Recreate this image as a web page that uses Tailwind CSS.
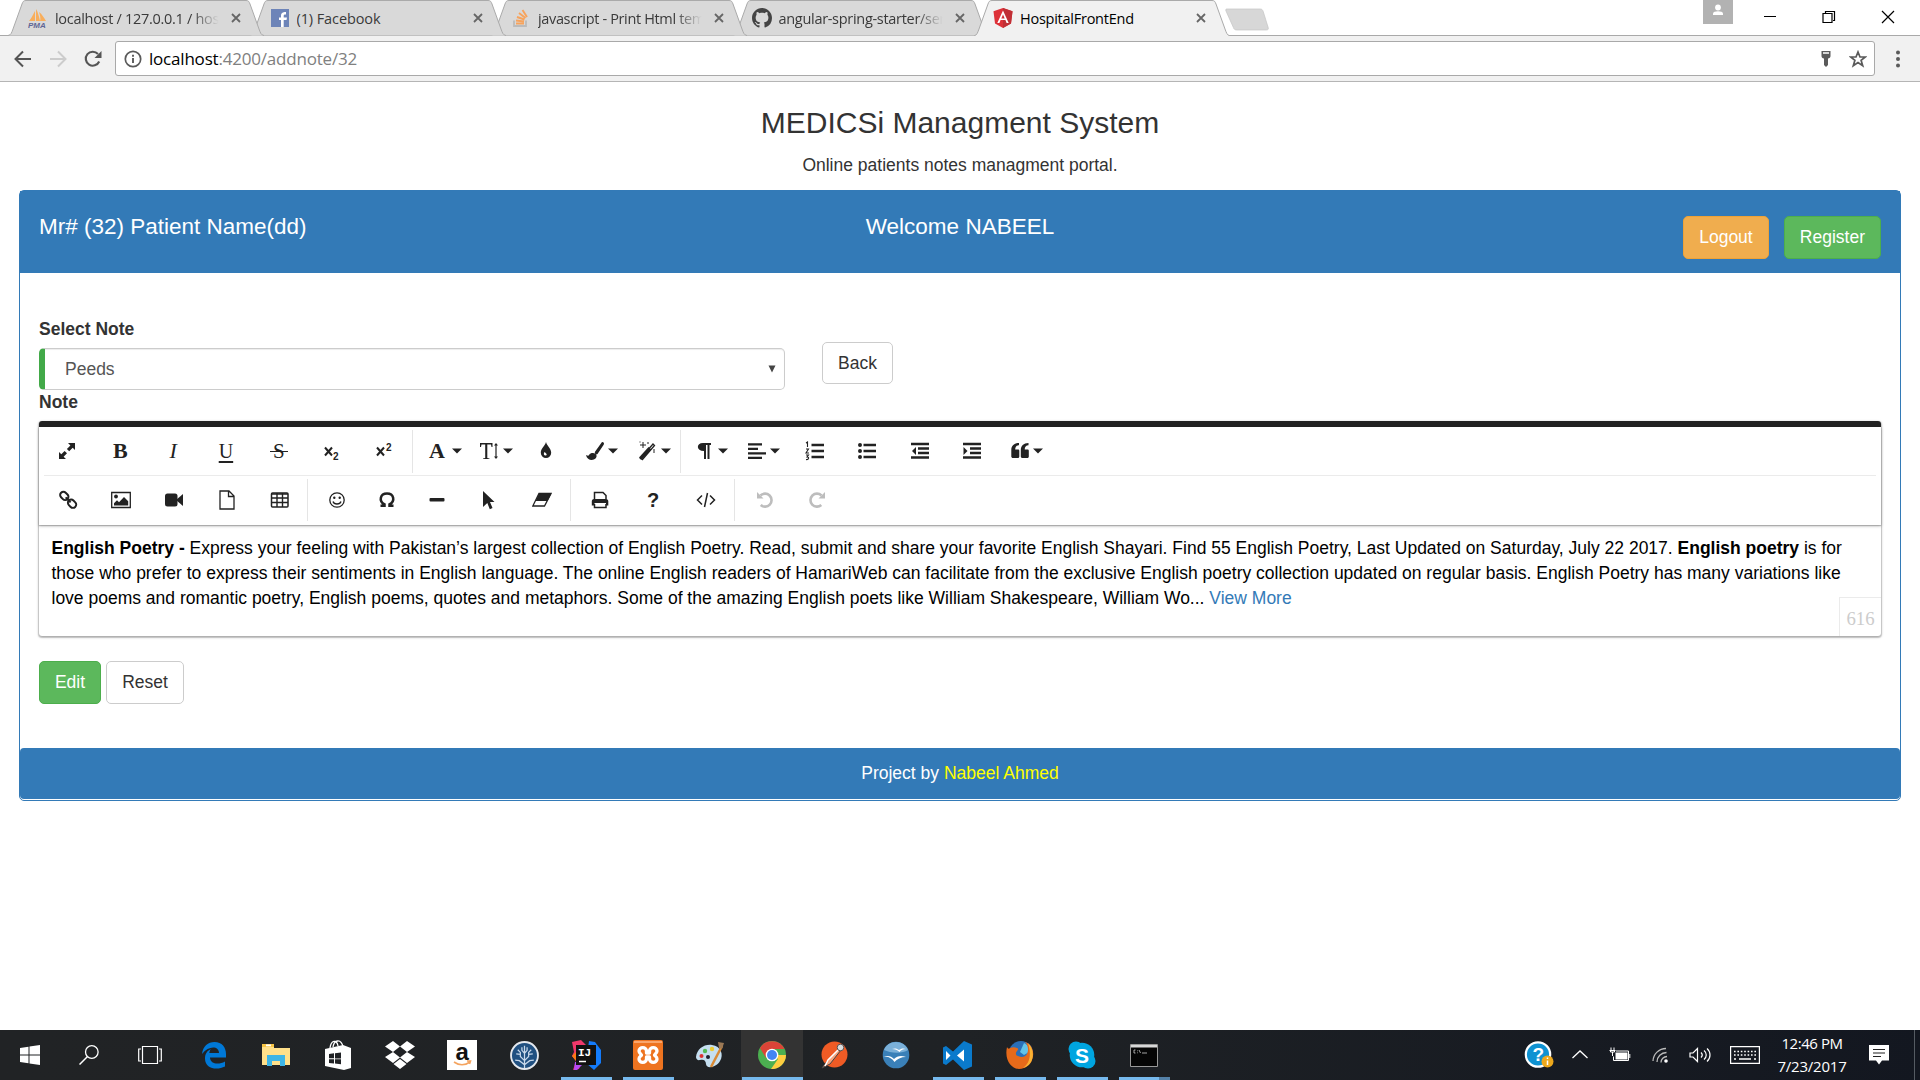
<!DOCTYPE html>
<html lang="en">
<head>
<meta charset="utf-8">
<title>HospitalFrontEnd</title>
<script src="https://cdn.jsdelivr.net/npm/@tailwindcss/browser@4"></script>
</head>
<body class="flex h-[1080px] w-[1920px] flex-col overflow-hidden bg-white font-['Liberation_Sans',Arial,sans-serif] text-[17.5px] leading-[25px] text-[#333]">

<svg width="0" height="0" class="absolute">
  <defs>
    <symbol id="close" viewBox="0 0 12 12"><path d="M2 2l8 8M10 2l-8 8" stroke="#666" stroke-width="1.8" fill="none"/></symbol>
    <symbol id="tab" viewBox="0 0 256 36"><path d="M0 35.5C3 35 3.500 33 5 29L14 4C15 1.500 15.500.5 18 .5H238C240.500.5 241 1.500 242 4L251 29C252.500 33 253 35 256 35.500" fill="#d9d9d9" stroke="#aaa"/></symbol>
    <symbol id="caret" viewBox="0 0 10 6"><path d="M0 .5h10L5 5.500z" fill="#222"/></symbol>
  </defs>
</svg>

<!-- Tab strip -->
<header class="flex h-9 shrink-0 justify-between border-b border-[#a9a9a9] bg-white font-['Open_Sans',sans-serif] text-[14.500px] tracking-[-0.350px] text-[#3a3a3a]">
  <div class="flex h-9 pl-2">
    <div class="relative z-40 -mr-[14.500px] flex h-9 w-64 shrink-0 items-center pl-5">
      <svg class="absolute top-0 left-0 h-9 w-64"><use href="#tab"/></svg>
      <svg class="relative mr-[7px] h-5 w-5 shrink-0" viewBox="0 0 20 20"><path d="M1 13C4 10 5 6 7 3v10zM8 13V1c2 3 3 8 4 12zM12 13c1-2 0-6-1-9 3 2 5 6 7 9z" fill="#f9ae5b"/><text x="0" y="19.500" font-size="8" letter-spacing="0" font-weight="bold" font-style="italic" fill="#5f6695" font-family="Liberation Sans">PMA</text></svg>
      <span class="relative w-[167px] overflow-hidden whitespace-nowrap tracking-[-0.300px] [mask-image:linear-gradient(to_right,black_82%,transparent_98%)]">localhost / 127.0.0.1 / hospital</span>
      <svg class="relative ml-2 h-3 w-3"><use href="#close"/></svg>
    </div>
    <div class="relative z-30 -mr-[14.500px] flex h-9 w-64 shrink-0 items-center pl-5">
      <svg class="absolute top-0 left-0 h-9 w-64"><use href="#tab"/></svg>
      <svg class="relative mr-[7px] h-5 w-5 shrink-0" viewBox="0 0 20 20"><path d="M1 1h18v18H1z" fill="#6d84b8"/><path d="M11 19v-7H9V9.500h2V8c0-3 1.500-4 5-4v2.500c-2 0-2.300.3-2.300 1.500v1.500H17L16.500 12h-2.800v7z" fill="#fff"/></svg>
      <span class="relative w-[167px] overflow-hidden whitespace-nowrap tracking-[-0.100px]">(1) Facebook</span>
      <svg class="relative ml-2 h-3 w-3"><use href="#close"/></svg>
    </div>
    <div class="relative z-20 -mr-[14.500px] flex h-9 w-64 shrink-0 items-center pl-5">
      <svg class="absolute top-0 left-0 h-9 w-64"><use href="#tab"/></svg>
      <svg class="relative mr-[7px] h-5 w-5 shrink-0" viewBox="0 0 20 20"><path d="M3 12.500v5.500h12v-5.500" stroke="#bbb" stroke-width="1.800" fill="none"/><path d="M5 15.500h8M5 12.500l8 1M6 9l7.500 2.500M8 5l6.500 5M11.500 2l4.500 7" stroke="#f7a35c" stroke-width="1.900"/></svg>
      <span class="relative w-[167px] overflow-hidden whitespace-nowrap [mask-image:linear-gradient(to_right,black_82%,transparent_98%)]">javascript - Print Html template</span>
      <svg class="relative ml-2 h-3 w-3"><use href="#close"/></svg>
    </div>
    <div class="relative z-10 -mr-[14.500px] flex h-9 w-64 shrink-0 items-center pl-5">
      <svg class="absolute top-0 left-0 h-9 w-64"><use href="#tab"/></svg>
      <svg class="relative mr-[7px] -ml-px h-5 w-5 shrink-0" viewBox="0 0 16 16"><path fill="#444" d="M8 0C3.580 0 0 3.580 0 8c0 3.540 2.290 6.530 5.470 7.590.4.070.55-.17.55-.38 0-.19-.01-.82-.01-1.490-2.010.37-2.530-.49-2.690-.94-.09-.23-.48-.94-.82-1.130-.28-.15-.68-.52-.01-.53.63-.01 1.080.58 1.230.82.72 1.210 1.870.87 2.330.66.07-.52.28-.87.51-1.070-1.780-.2-3.640-.89-3.640-3.950 0-.87.31-1.590.82-2.150-.08-.2-.36-1.020.08-2.120 0 0 .67-.21 2.200.82.64-.18 1.320-.27 2-.27s1.360.09 2 .27c1.530-1.040 2.200-.82 2.200-.82.44 1.100.16 1.920.08 2.120.51.56.82 1.270.82 2.150 0 3.070-1.870 3.750-3.650 3.950.29.25.54.73.54 1.480 0 1.070-.01 1.930-.01 2.200 0 .21.15.46.55.38A8.010 8.010 0 0016 8c0-4.420-3.580-8-8-8z"/></svg>
      <span class="relative w-[167px] overflow-hidden whitespace-nowrap tracking-[-0.300px] [mask-image:linear-gradient(to_right,black_82%,transparent_98%)]">angular-spring-starter/server</span>
      <svg class="relative ml-2 h-3 w-3"><use href="#close"/></svg>
    </div>
    <div class="relative z-50 flex h-9 w-64 shrink-0 items-center pl-[19px] text-black">
      <svg class="absolute top-0 left-0 h-9 w-64" viewBox="0 0 256 36"><path d="M0 36C3 35 3.500 33 5 29L14 4C15 1.500 15.500.5 18 .5H238C240.500.5 241 1.500 242 4L251 29C252.500 33 253 35 256 36" fill="#f1f1f1" stroke="#aaa"/></svg>
      <svg class="relative mr-[7px] h-5 w-5 shrink-0" viewBox="0 0 20 20"><path d="M10 0l9.500 3.300L18 15.500 10 20l-8-4.500L.5 3.300z" fill="#dd3138"/><path d="M10 0l9.500 3.300L18 15.500 10 20z" fill="#c02f35"/><path d="M10 2.500L4.300 15h2.100l1.200-2.900h4.800l1.200 2.900h2.100zM10 6.400l1.700 4H8.300z" fill="#fff"/></svg>
      <span class="relative w-[167px] overflow-hidden whitespace-nowrap tracking-[-0.250px]">HospitalFrontEnd</span>
      <svg class="relative ml-2 h-3 w-3"><use href="#close"/></svg>
    </div>
    <svg class="-ml-[5px] h-8 w-11 pt-2" viewBox="0 0 44 24"><path d="M2 1h33c2 0 2.500.8 3.200 2.500L43 19c.8 2 .3 3-2 3H12c-2 0-3-.6-3.600-2.500L1 3C.5 1.500.7 1 2 1z" fill="#d7d7d7" stroke="#c4c4c4" stroke-width=".7"/></svg>
  </div>
  <div class="flex">
    <svg class="h-6 w-[30px]" viewBox="0 0 30 24"><path d="M0 0h30v24H0z" fill="#b2b2b2"/><circle cx="15" cy="7.500" r="2.900" fill="#fff"/><path d="M10 15v-1.500c0-3 10-3 10 0V15z" fill="#fff"/></svg>
    <svg class="ml-[31px] h-9 w-3" viewBox="0 0 12 36"><path d="M0 16.500h12" stroke="#000"/></svg>
    <svg class="ml-[46px] h-9 w-3.5" viewBox="0 0 14 36"><path d="M1 13.500h9v9H1zM3.500 13v-1.500h9v9H11" fill="none" stroke="#000" stroke-width="1.200"/></svg>
    <svg class="mr-[25px] ml-[45px] h-9 w-3.5" viewBox="0 0 14 36"><path d="M1 11l12 12M13 11L1 23" stroke="#000" stroke-width="1.200"/></svg>
  </div>
</header>

<!-- Address bar -->
<nav class="flex h-[46px] shrink-0 items-center border-b border-[#b5b5b5] bg-[#f1f1f1] pl-3.5">
  <svg class="h-[18px] w-[18px]" viewBox="0 0 18 18"><path d="M17 9H2M9 1.500L1.500 9 9 16.500" fill="none" stroke="#555" stroke-width="2"/></svg>
  <svg class="ml-[17px] h-[18px] w-[18px]" viewBox="0 0 18 18"><path d="M1 9h15M9 1.500L16.500 9 9 16.500" fill="none" stroke="#ccc" stroke-width="2"/></svg>
  <svg class="ml-[17px] h-[18px] w-[18px]" viewBox="0 0 18 18"><path d="M15.200 11.500A7 7 0 1 1 14 4" fill="none" stroke="#555" stroke-width="2.100"/><path d="M17.500 1v7h-7z" fill="#555"/></svg>
  <div class="ml-[13px] flex h-[35px] w-[1760px] items-center rounded-[3px] border border-[#a9a9a9] bg-white pr-[7px] pl-2">
    <svg class="h-[18px] w-[18px]" viewBox="0 0 18 18"><circle cx="9" cy="9" r="7.700" fill="none" stroke="#5a5a5a" stroke-width="1.700"/><path d="M9 8v5M9 4.800v2" stroke="#5a5a5a" stroke-width="1.900"/></svg>
    <span class="ml-[7px] font-['Open_Sans',sans-serif] text-[17px] tracking-[-0.200px] text-[#808080]"><span class="text-black">localhost</span>:4200/addnote/32</span>
    <svg class="mr-[17px] ml-auto h-4 w-3" viewBox="0 0 12 16"><path fill-rule="evenodd" d="M1.500 0h9v5c0 1.500-1 2.500-2.500 2.500V14l-2 2-2-2V7.500C2.500 7.500 1.500 6.500 1.500 5zM3 1.300v1.400h6V1.300z" fill="#5a5a5a"/></svg>
    <svg class="h-[18px] w-[18px]" viewBox="0 0 18 18"><path d="M9 2l2 5h5.300l-4.200 3.300 1.600 5.400L9 12.500l-4.700 3.200 1.600-5.400L1.700 7H7z" fill="none" stroke="#5a5a5a" stroke-width="1.700"/></svg>
  </div>
  <svg class="ml-5 h-[18px] w-1.5" viewBox="0 0 6 18"><path d="M3 2.500v0M3 9v0M3 15.500v0" stroke="#5a5a5a" stroke-width="4" stroke-linecap="round"/></svg>
</nav>

<!-- Page -->
<main class="flex grow flex-col px-[19px] pt-6">
  <h3 class="text-center text-[30px] leading-[33px]">MEDICSi Managment System</h3>
  <p class="mt-3.5 text-center">Online patients notes managment portal.</p>

  <section class="mt-3 flex h-[611px] flex-col rounded-[5px] border border-[#337ab7]">
    <div class="flex h-[82px] shrink-0 bg-[#337ab7] px-[19px] text-white">
      <h4 class="w-1/3 pt-[23px] text-[22.500px]">Mr# (32) Patient Name(dd)</h4>
      <h4 class="w-1/3 pt-[23px] text-center text-[22.500px]">Welcome NABEEL</h4>
      <div class="flex w-1/3 justify-end gap-[15px] pt-[25px]">
        <button class="h-[43px] w-[86px] rounded-[5px] border border-[#eea236] bg-[#f0ad4e]">Logout</button>
        <button class="h-[43px] w-[97px] rounded-[5px] border border-[#4cae4c] bg-[#5cb85c]">Register</button>
      </div>
    </div>
    <div class="flex grow flex-col px-[19px] pt-[44px]">
      <div class="flex">
        <div class="w-[746px]">
          <label class="block font-bold">Select Note</label>
          <div class="mt-[6px] flex h-[42px] items-center justify-between rounded-[5px] border border-l-[6px] border-[#ccc] border-l-[#42a948] pr-2 pl-5 text-[#555] shadow-[inset_0_1px_1px_rgba(0,0,0,0.075)]">Peeds<svg class="h-2 w-2" viewBox="0 0 8 8"><path d="M.5.5h7L4 7.500z" fill="#444"/></svg></div>
        </div>
        <button class="mt-[25px] ml-[37px] h-[42px] w-[71px] rounded-[5px] border border-[#ccc]">Back</button>
      </div>
      <label class="block h-[31px] font-bold">Note</label>

      <!-- Rich text editor -->
      <div class="h-[215px] shrink-0 rounded-[3px] border-t-[6px] border-[#222] shadow-[0_1px_3px_rgba(0,0,0,0.3),0_1px_1px_1px_rgba(0,0,0,0.14)]">
        <div class="h-[98px] px-[5px] shadow-[0_1px_3px_rgba(0,0,0,0.25),0_1px_1px_rgba(0,0,0,0.2)]">
          <div class="flex h-[49px] items-center border-b border-[#ebebeb]">
            <div class="-ml-[3px] flex w-[370px] shrink-0 items-center justify-around">
              <svg class="h-5 w-5" viewBox="0 0 20 20"><path d="M11 2h7v7l-2.300-2.300-3.500 3.500-2.300-2.300 3.500-3.500zM9 18H2v-7l2.300 2.300 3.300-3.300 2.400 2.300-3.400 3.400z" fill="#222"/></svg>
              <span class="w-5 text-center font-['Liberation_Serif',serif] text-[22px] leading-5 font-bold text-[#222]">B</span>
              <span class="w-5 text-center font-['Liberation_Serif',serif] text-[22px] leading-5 text-[#222] italic">I</span>
              <span class="w-5 text-center font-['Liberation_Serif',serif] text-[20px] leading-5 text-[#222] underline underline-offset-3">U</span>
              <span class="relative flex w-5 justify-center font-['Liberation_Serif',serif] text-[21px] leading-5 text-[#222]">S<i class="absolute top-[10px] left-px h-px w-[18px] bg-[#222]"></i></span>
              <svg class="h-5 w-5" viewBox="0 0 20 20"><path d="M3 6.500l7 8M10 6.500l-7 8" stroke="#222" stroke-width="2"/><text x="11" y="19" font-size="10" font-weight="bold" fill="#222">2</text></svg>
              <svg class="h-5 w-5" viewBox="0 0 20 20"><path d="M3 6.500l7 8M10 6.500l-7 8" stroke="#222" stroke-width="2"/><text x="12" y="9.500" font-size="10" font-weight="bold" fill="#222">2</text></svg>
            </div>
            <div class="ml-px h-[43px] w-px shrink-0 bg-[#e5e5e5]"></div>
            <div class="flex w-[267px] shrink-0 items-center pl-[13px]">
              <span class="flex w-[53px] shrink-0 items-center gap-1"><span class="w-[22px] text-center font-['Liberation_Serif',serif] text-[22px] leading-5 font-bold text-[#222]">A</span><svg class="h-1.5 w-2.5"><use href="#caret"/></svg></span>
              <span class="flex w-[60px] shrink-0 items-center gap-1"><svg class="h-5 w-5" viewBox="0 0 20 20"><path d="M1 2h12.500v4h-1l-.5-2.500H8.300V17l2.200.5V18H4v-.5l2.200-.5V3.500H2.500L2 6H1zM17 2l2 2.500h-1.400v11H19L17 18l-2-2.500h1.400v-11H15z" fill="#222"/></svg><svg class="h-1.5 w-2.5"><use href="#caret"/></svg></span>
              <svg class="mr-[26px] h-5 w-5 shrink-0" viewBox="0 0 20 20"><path fill-rule="evenodd" d="M7 1c1 4 5.200 6.500 5.200 10.700A5.200 5.200 0 1 1 1.800 11.700C1.800 7.500 6 5 7 1zM5.500 11c-1.200 1.700-.7 3.500 1 3.500 1.500 0 2-1.500-1-3.500z" fill="#222"/></svg>
              <span class="flex w-[52px] shrink-0 items-center gap-[3px]"><svg class="h-5 w-5" viewBox="0 0 20 20"><path d="M17 1c2 0 2.500 1.500 1.500 3l-6 9c-1 1.300-3.500-1-2.500-2.200zM8 12c3 0 5 3 2.500 5.500C8 20 2 19.500 1 14c2 1 2.500 1 3 0 1-1.500 2-2 4-2z" fill="#222"/></svg><svg class="h-1.5 w-2.5"><use href="#caret"/></svg></span>
              <span class="flex shrink-0 items-center gap-[4px]"><svg class="h-5 w-5" viewBox="0 0 20 20"><path d="M3 18L16 3l1.500 1.500L5 19" fill="none" stroke="#222" stroke-width="1.300"/><path d="M2 16.500L11.500 6l3 2.500L4.500 19z" fill="#222"/><path d="M6 1v6M3 4h6M11 1v2M17 8v4M3 .5v1" stroke="#222" stroke-width="1"/></svg><svg class="h-1.5 w-2.5"><use href="#caret"/></svg></span>
            </div>
            <div class="h-[43px] w-px shrink-0 bg-[#e5e5e5]"></div>
            <div class="flex items-center pl-[13px]">
              <span class="flex w-[53px] items-center gap-1"><svg class="h-5 w-5" viewBox="0 0 20 20"><path d="M17 2v2h-1.500v14h-2V4H12v14h-2v-8C2 10 2 2 9 2z" fill="#222"/></svg><svg class="h-1.5 w-2.5"><use href="#caret"/></svg></span>
              <span class="flex w-[58px] items-center gap-[3px]"><svg class="h-5 w-5" viewBox="0 0 20 20"><path d="M1 3h14M1 7.500h10M1 12h18M1 16.500h14" transform="translate(0 .3)" stroke="#222" stroke-width="2.200"/></svg><svg class="h-1.5 w-2.5"><use href="#caret"/></svg></span>
              <svg class="h-5 w-5" viewBox="0 0 20 20"><path d="M6.500 4H19M6.500 10H19M6.500 16H19" stroke="#222" stroke-width="2.500"/><path d="M1 2l1.500-1v5M1 8h2.500L1 12h3M1 14h2.500L2 16c2.500 0 2 3-1 2.500" fill="none" stroke="#222" stroke-width="1.100"/></svg>
              <svg class="ml-8 h-5 w-5" viewBox="0 0 20 20"><path d="M6.500 4H19M6.500 10H19M6.500 16H19" stroke="#222" stroke-width="2.500"/><path d="M3 4v0M3 10v0M3 16v0" stroke="#222" stroke-width="4" stroke-linecap="round"/></svg>
              <svg class="ml-[33px] h-5 w-5" viewBox="0 0 20 20"><path d="M1 3h18M8 7.500h11M8 12h11M1 16.500h18" stroke="#222" stroke-width="2.300"/><path d="M6 6v8l-4-4z" fill="#222"/></svg>
              <svg class="ml-8 h-5 w-5" viewBox="0 0 20 20"><path d="M1 3h18M8 7.500h11M8 12h11M1 16.500h18" stroke="#222" stroke-width="2.300"/><path d="M1.500 6v8l4-4z" fill="#222"/></svg>
              <svg class="mr-[3px] ml-7 h-5 w-5" viewBox="0 0 20 20"><path id="q" d="M9 2v2.200C6.500 4.200 5.200 6 5.200 8.500H8c.8 0 1.300.5 1.300 1.300v5.700c0 .8-.5 1.500-1.500 1.500H3c-1 0-1.700-.7-1.700-1.500V9C1.300 5 4 2 9 2z" fill="#222"/><use href="#q" x="9.500"/></svg><svg class="h-1.5 w-2.5"><use href="#caret"/></svg>
            </div>
          </div>
          <div class="flex h-[49px] items-center pb-0.5">
            <div class="-ml-[3px] flex w-[266px] justify-around">
              <svg class="h-5 w-5" viewBox="0 0 20 20"><g transform="rotate(45 10 10)" fill="none" stroke="#222" stroke-width="2"><rect x="0" y="6.500" width="9" height="6.500" rx="3.200"/><rect x="11" y="6.500" width="9" height="6.500" rx="3.200"/><path d="M6.500 9.800h7"/></g></svg>
              <svg class="h-5 w-5" viewBox="0 0 20 20"><path d="M.7 2.500h18.600v15H.7z" fill="none" stroke="#222" stroke-width="1.300"/><circle cx="5" cy="6.500" r="1.900" fill="#222"/><path d="M3 15.500v-2.300l3-3 2 2L13 7l4.200 4.200v4.300z" fill="#222"/></svg>
              <svg class="h-5 w-5" viewBox="0 0 20 20"><rect x="1" y="3.500" width="12.500" height="13" rx="2.500" fill="#222"/><path d="M12 10l7-6v12z" fill="#222"/></svg>
              <svg class="h-5 w-5" viewBox="0 0 20 20"><path d="M3 1h9l5 5v13H3zM11.500 1v5.500H17" fill="none" stroke="#222" stroke-width="1.300"/></svg>
              <svg class="h-5 w-5" viewBox="0 0 20 20"><rect x="1.500" y="3" width="16.500" height="14" rx="1" fill="none" stroke="#222" stroke-width="1.500"/><path d="M1 4h17M1 8h17M1 12.500h17M7 3v14M12.500 3v14" stroke="#222" stroke-width="1.400"/></svg>
            </div>
            <div class="h-[42px] w-px bg-[#e5e5e5]"></div>
            <div class="flex items-center pl-[19px]">
              <svg class="h-5 w-5" viewBox="0 0 20 20"><circle cx="10" cy="10" r="7.200" fill="none" stroke="#222" stroke-width="1.300"/><path d="M6 11.500c1 3.300 7 3.300 8 0" fill="none" stroke="#222" stroke-width="1.300"/><circle cx="7.300" cy="7.700" r="1.200" fill="#222"/><circle cx="12.700" cy="7.700" r="1.200" fill="#222"/></svg>
              <svg class="ml-[30px] h-5 w-5" viewBox="0 0 20 20"><path d="M3.500 15.800h4v-1.500C1.500 11 3 3.500 10 3.500s8.500 7.500 2.500 10.800v1.500h4" fill="none" stroke="#222" stroke-width="2.500"/></svg>
              <svg class="ml-[30px] h-5 w-5" viewBox="0 0 20 20"><rect x="2.500" y="8" width="15" height="3.500" rx="1" fill="#222"/></svg>
              <svg class="ml-[32px] h-5 w-5" viewBox="0 0 20 20"><path d="M4 1l11.500 11H11l2.500 6-2.700 1.200L8.300 13 4 17z" fill="#222"/></svg>
              <svg class="ml-[33px] h-5 w-5" viewBox="0 0 20 20"><path d="M7 3.500h12L12.500 16H.8z" fill="none" stroke="#222" stroke-width="1.300"/><path d="M7 3.500h12.500l-4 7.500H3.500z" fill="#222"/></svg>
            </div>
            <div class="ml-[18px] h-[42px] w-px bg-[#e5e5e5]"></div>
            <div class="flex items-center pl-[19px]">
              <svg class="h-5 w-5" viewBox="0 0 20 20"><path d="M4.500 9.500V2.500h8.500l3 3v4M4.500 14v3.500h11.500V14" fill="none" stroke="#222" stroke-width="1.500"/><path d="M4 9h12c1.500 0 2.300 1 2.300 2.300v4.200H16V13H4.500v2.500H1.800v-4.200C1.800 10 2.500 9 4 9z" fill="#222"/></svg>
              <span class="ml-[33px] w-5 text-center text-[20px] leading-5 font-bold text-[#222]">?</span>
              <svg class="ml-[33px] h-5 w-5" viewBox="0 0 20 20"><path d="M6 5.500L1.500 10 6 14.500M14 5.500l4.500 4.500-4.500 4.500M11.500 3l-3 14" fill="none" stroke="#222" stroke-width="1.500"/></svg>
            </div>
            <div class="ml-[18px] h-[42px] w-px bg-[#e5e5e5]"></div>
            <div class="flex items-center gap-8 pl-5">
              <svg class="h-5 w-5" viewBox="0 0 20 20"><path d="M5.500 5.500a6.500 6.500 0 1 1 .2 9.500" fill="none" stroke="#bdbdbd" stroke-width="2.600"/><path d="M2 2v6.500h6.500z" fill="#bdbdbd"/></svg>
              <svg class="h-5 w-5" viewBox="0 0 20 20"><path d="M14.500 5.500a6.500 6.500 0 1 0-.2 9.500" fill="none" stroke="#bdbdbd" stroke-width="2.600"/><path d="M18 2v6.500h-6.500z" fill="#bdbdbd"/></svg>
            </div>
          </div>
        </div>
        <div class="relative h-[111px] px-[12.500px] pt-[11px] text-black">
          <p class="whitespace-nowrap"><b>English Poetry - </b>Express your feeling with Pakistan’s largest collection of English Poetry. Read, submit and share your favorite English Shayari. Find 55 English Poetry, Last Updated on Saturday, July 22 2017. <b>English poetry</b> is for<br>those who prefer to express their sentiments in English language. The online English readers of HamariWeb can facilitate from the exclusive English poetry collection updated on regular basis. English Poetry has many variations like<br>love poems and romantic poetry, English poems, quotes and metaphors. Some of the amazing English poets like William Shakespeare, William Wo... <a class="text-[#337ab7]">View More</a></p>
          <span class="absolute right-0 bottom-0 flex h-[39px] w-[42px] items-center justify-center border-t border-l border-[#ebebeb] pt-0.5 font-['Liberation_Serif',serif] text-[18.750px] text-[#ccc]">616</span>
        </div>
      </div>

      <div class="mt-[25px] flex gap-[5px]">
        <button class="h-[43px] w-[62px] rounded-[5px] border border-[#4cae4c] bg-[#5cb85c] text-white">Edit</button>
        <button class="h-[43px] w-[78px] rounded-[5px] border border-[#ccc]">Reset</button>
      </div>
    </div>
    <footer class="mb-px h-[51px] shrink-0 rounded-[4px] bg-[#337ab7] pt-[13px] text-center text-white">Project by <span class="text-[#ff0]">Nabeel Ahmed</span></footer>
  </section>
</main>

<!-- Taskbar -->
<div class="flex h-[50px] shrink-0 justify-between bg-gradient-to-r from-[#212325] via-[#1f2225] to-[#131720]">
  <div class="flex">
    <div class="mr-[2px] flex w-[181px] items-center justify-around pl-px">
      <svg class="h-5 w-5" viewBox="0 0 20 20"><path d="M0 3l8.500-1.200v7.700H0zM9.500 1.600L20 0v9.500H9.500zM0 10.500h8.500v7.700L0 17zM9.500 10.500H20V20L9.500 18.400z" fill="#fff"/></svg>
      <svg class="h-5 w-5" viewBox="0 0 20 20"><circle cx="12.800" cy="7" r="6.300" fill="none" stroke="#fff" stroke-width="1.300"/><path d="M8.500 11.500L.5 19.500" stroke="#fff" stroke-width="1.500"/></svg>
      <svg class="h-5 w-6" viewBox="0 0 24 20"><path d="M4.500 1.500h15v17h-15zM3 4H.7v12H3M21 4h2.300v12H21" fill="none" stroke="#fff" stroke-width="1.200"/></svg>
    </div>
    <div class="flex w-[62px] items-center justify-center"><svg class="h-7 w-7" viewBox="0 0 28 28"><path d="M2 13C3 5 8 1 14.500 1 22 1 26 6.500 26 13v3.500H10c.3 7 9 7.500 15 4v5c-8 4-20 2.500-20-8 0-5 2.500-8 6-9.500-1 1-1.500 2.500-1.700 4H19C19 5 9 4 2 13z" fill="#0078d7"/></svg></div>
    <div class="flex w-[62px] items-center justify-center"><svg class="h-7 w-7" viewBox="0 0 28 28"><path d="M0 3h12v4h16v17H0z" fill="#ffe08a"/><path d="M0 3h12v3H0z" fill="#f6c445"/><path d="M4 3.500h5v1.800H4z" fill="#fff"/><path d="M5 14h18v11h-5v-5h-8v5H5z" fill="#3db5e6"/></svg></div>
    <div class="flex w-[62px] items-center justify-center"><svg class="h-[30px] w-7" viewBox="0 0 28 30"><path d="M1 9l18-4 8 3v20l-7 2-19-4z" fill="#fff"/><path d="M6 8C7 0 13-1 14 6M9 7c1-7 8-9 10 0" fill="none" stroke="#fff" stroke-width="1.300"/><path d="M5 14l5-.7v5H5zM11 13.200l6-.8v6h-6zM5 19.300h5v4.200l-5-.5zM11 19.300h6v5l-6-.7z" fill="#202225"/></svg></div>
    <div class="flex w-[62px] items-center justify-center"><svg class="h-7 w-[30px]" viewBox="0 0 30 28"><path d="M8 0l7 5.500L8 11 0 5.500zM22 0l-7 5.500 7 5.500 8-5.500zM0 16l8-5 7 5.500L8 22zM30 16l-8-5-7 5.500 7 5.500zM15 18l6.500 5-6.500 5-6.500-5z" fill="#fff"/></svg></div>
    <div class="flex w-[62px] items-center justify-center"><svg class="h-[30px] w-[30px]" viewBox="0 0 30 30"><path d="M0 0h30v30H0z" fill="#fff"/><text x="8.500" y="19.500" font-size="24" font-weight="bold" fill="#111" font-family="Liberation Sans">a</text><path d="M7 22c5 3.500 11 3.500 16 0M20 21h3.500l-1 3" fill="none" stroke="#f4a460" stroke-width="1.600"/></svg></div>
    <div class="flex w-[62px] items-center justify-center"><svg class="h-[29px] w-[29px]" viewBox="0 0 28 28"><circle cx="14" cy="14" r="13" fill="#205081" stroke="#e4e8ee" stroke-width="1.800"/><path d="M14 26V4.500M14 19l-4-4v-4L7.500 8.500M14 19l4-4v-4l2.500-2.500M10 13l-4-.5M18 13l4-.5M14 23l-5-4-4-.5M14 23l5-4 4-.5M14 12l-2.500-3V6M14 12l2.500-3V6" fill="none" stroke="#c8d8ea" stroke-width="1.200"/></svg></div>
    <div class="relative flex w-[62px] items-center justify-center"><svg class="h-[30px] w-[30px]" viewBox="0 0 30 30"><path d="M1 2l9-2 6 6L8 29 2 30l3-9-4-5 2-4z" fill="#f0386b"/><path d="M1 16l5-5 3 13-4-3z" fill="#f97a12"/><path d="M4 22h10l-8 8H3z" fill="#b74af7"/><path d="M18 1l6 1 6 8v13l-7 7-8-7z" fill="#147bfa"/><path d="M5 5h20v20H5z" fill="#111"/><text x="7" y="16" font-size="11" font-weight="bold" fill="#fff" font-family="Liberation Mono">IJ</text><path d="M8 21.500h7" stroke="#fff" stroke-width="1.500"/></svg><i class="absolute bottom-0 h-[3px] w-[51px] bg-[#76b9ed]"></i></div>
    <div class="relative flex w-[62px] items-center justify-center"><svg class="h-[30px] w-[30px]" viewBox="0 0 30 30"><rect width="30" height="30" rx="2" fill="#ee7420"/><path d="M1 1h28v2H1z" fill="#f9a66c"/><path d="M13.500 11c0-4.500-7.500-4.500-7.500 0 0 2.500 2.500 3 2.500 4S6 16.500 6 19c0 4.500 7.500 4.500 7.500 0v-2h3v2c0 4.500 7.500 4.500 7.500 0 0-2.500-2.500-3-2.500-4s2.500-1.500 2.500-4c0-4.500-7.500-4.500-7.500 0v2h-3z" fill="#ee7420" stroke="#fff" stroke-width="3.300" stroke-linejoin="round"/></svg><i class="absolute bottom-0 h-[3px] w-[51px] bg-[#76b9ed]"></i></div>
    <div class="flex w-[62px] items-center justify-center"><svg class="h-[30px] w-[30px]" viewBox="0 0 30 30"><path d="M1 17C2 9 9 4 17 5c9 1 12 10 8 16-4 7-14 8-14 3 0-4-3-5-6-4-2 .5-4-.5-4-3z" fill="#c5dff0"/><circle cx="6.500" cy="16" r="2" fill="#d33"/><circle cx="10" cy="11" r="2.200" fill="#5b5"/><circle cx="17" cy="9" r="2.200" fill="#ec3"/><circle cx="13" cy="17" r="2" fill="#223"/><path d="M27 6L16 27" stroke="#d88a35" stroke-width="2.500"/><path d="M23 2l6 1-2 6-3-1z" fill="#9a7855"/></svg></div>
    <div class="relative flex w-[62px] items-center justify-center bg-[#333]"><svg class="h-7 w-7" viewBox="0 0 28 28"><circle cx="14" cy="14" r="14" fill="#4caf50"/><path d="M14 14H28A14 14 0 0 1 13 28l7-10z" fill="#ffcd40"/><path d="M2 7A14 14 0 0 1 26.500 8H14l-6 9z" fill="#db4437"/><circle cx="14" cy="14" r="6.300" fill="#fff"/><circle cx="14" cy="14" r="5" fill="#4285f4"/></svg><i class="absolute bottom-0 h-[3px] w-[61px] bg-[#76b9ed]"></i></div>
    <div class="flex w-[62px] items-center justify-center"><svg class="h-7 w-7" viewBox="0 0 28 28"><circle cx="14.500" cy="13.500" r="13" fill="#ef5b25"/><path d="M20 7L8 19l-6 8 8-4L21 9" fill="#f7a57f" stroke="#444" stroke-width="1"/><path d="M20 7L8 19l-3 6" stroke="#fff" stroke-width="1.500" fill="none"/><circle cx="20.500" cy="6.500" r="3.300" fill="#ddd" stroke="#555"/></svg></div>
    <div class="flex w-[62px] items-center justify-center"><svg class="h-7 w-7" viewBox="0 0 28 28"><circle cx="14" cy="14" r="13.300" fill="#3a80b8"/><path d="M2 9a13 13 0 0 1 24 0c-6 4-18 3-24 0z" fill="#7bb0d8"/><path d="M1 16c5-2 8-1 11 2 3-3 7-4 12-2-5 0-9 2-11.500 5C10 17 6 15 1 16zM10 8c3-1 5-.5 7 1 2-1.500 4-2 7-1-3 0-5 1-6.500 3C15.500 9 13 8 10 8z" fill="#fff"/></svg></div>
    <div class="relative flex w-[62px] items-center justify-center"><svg class="h-[29px] w-[30px]" viewBox="0 0 30 29"><path d="M21 0l8 3.500v22L21 29 10 18.500 3 24l-3-1.500v-16L3 5l7 5.500z" fill="#0a7acc"/><path d="M21 8.500v12l-7-6zM3 10l4.500 4.500L3 19z" fill="#fff"/></svg><i class="absolute bottom-0 h-[3px] w-[51px] bg-[#76b9ed]"></i></div>
    <div class="relative flex w-[62px] items-center justify-center"><svg class="h-7 w-7" viewBox="0 0 28 28"><circle cx="15" cy="12" r="12" fill="#2a6fb8"/><path d="M18 2c4 2 6 5 5 9l-5 3-4-3z" fill="#63c3e8"/><path d="M1 6c1 2 2 2 3 1 2-1 5-1 7 0 2 .5 1 2 0 3-2 2-1 5 1 5 4 2 7 1 9-2 2-4 1-9-2-12 6 2 9 8 8 14-1 8-7 13-14 13C6 28-2 20 1 6z" fill="#e66a1a"/><path d="M22 2c8 8 6 22-5 25 6-4 9-12 5-25z" fill="#f9b233"/></svg><i class="absolute bottom-0 h-[3px] w-[51px] bg-[#76b9ed]"></i></div>
    <div class="relative flex w-[62px] items-center justify-center"><svg class="h-7 w-7" viewBox="0 0 28 28"><circle cx="14" cy="14" r="12.300" fill="#00a5e0"/><circle cx="8" cy="8" r="7.500" fill="#00a5e0"/><circle cx="20" cy="20" r="7.500" fill="#00a5e0"/><text x="7" y="21.500" font-size="21" font-weight="bold" fill="#fff" font-family="Liberation Sans">S</text></svg><i class="absolute bottom-0 h-[3px] w-[51px] bg-[#76b9ed]"></i></div>
    <div class="relative flex w-[62px] items-center justify-center"><svg class="h-[23px] w-7" viewBox="0 0 28 23"><path d="M.5.5h27v22H.5z" fill="#050505" stroke="#999"/><path d="M1 1h26v2.500H1z" fill="#d8d8d8"/><path d="M5.500 6H4v3h1.500M7.500 6.500v.7M7.500 8.500v.7M9 6l1.500 3M12 9h5" fill="none" stroke="#ccc" stroke-width=".8"/></svg><i class="absolute bottom-0 left-[6px] h-[3px] w-[40px] bg-[#76b9ed]"></i><i class="absolute bottom-0 left-[46px] h-[3px] w-[11px] bg-[#5481a8]"></i></div>
  </div>
  <div class="flex items-center text-white">
    <svg class="h-7 w-[30px]" viewBox="0 0 30 28"><circle cx="14" cy="13.500" r="12.200" fill="#0e92d2" stroke="#fff" stroke-width="2.200"/><text x="8.500" y="20" font-size="19" font-weight="bold" fill="#fff" font-family="Liberation Sans">?</text><circle cx="23.500" cy="20.500" r="6" fill="#eda81c"/><path d="M23.500 16.500v1.500M23.500 19.500v4.500" stroke="#fff" stroke-width="1.500"/></svg>
    <svg class="ml-[18px] h-4 w-4" viewBox="0 0 16 16"><path d="M.5 11L8 4l7.500 7" fill="none" stroke="#fff" stroke-width="1.300"/></svg>
    <svg class="ml-[21px] h-4 w-[22px]" viewBox="0 0 22 16"><path d="M6.500 5.500h12v7h-12z" fill="#fff"/><path d="M7 4h12.500v9.500H4.500V9.500M20.800 7v4" fill="none" stroke="#fff"/><path d="M2 .5v2.500M5 .5v2.500M.5 3.500h6M1.500 3.500v1.500h4V3.500M3.500 5v4" fill="none" stroke="#fff"/></svg>
    <svg class="ml-[21px] h-4 w-4" viewBox="0 0 16 16"><path d="M1 14A13 13 0 0 1 14 1.500M5 15A9.500 9.500 0 0 1 14.500 5.500M9 15.500A6 6 0 0 1 15 9.500" fill="none" stroke="#bbb" stroke-width="1.300"/><circle cx="14" cy="14" r="1.800" fill="#fff"/></svg>
    <svg class="ml-[21px] h-4 w-[22px]" viewBox="0 0 22 16"><path d="M1 6h3l4.500-4.500v13L4 10H1zM12 5.500c1.500 1.500 1.500 3.500 0 5M15 3.500c3 2.500 3 6.500 0 9M18 1.500c4 3.500 4 9.500 0 13" fill="none" stroke="#fff" stroke-width="1.200"/></svg>
    <svg class="ml-[19px] h-[18px] w-[30px]" viewBox="0 0 30 18"><path d="M.6.600h28.800v16.800H.6z" fill="none" stroke="#fff" stroke-width="1.200"/><path d="M4 5.500h22M4 9h22" stroke="#fff" stroke-width="1.500" stroke-dasharray="1.600 1.800"/><path d="M4 13h2M9 13h12M24 13h2" stroke="#fff" stroke-width="1.300"/></svg>
    <div class="ml-[15px] w-[74px] text-center font-['Open_Sans',sans-serif] text-[15px] leading-[23px] tracking-[-0.450px] whitespace-nowrap">12:46 PM<br><span class="tracking-[-0.200px]">7/23/2017</span></div>
    <svg class="ml-[20px] h-5 w-5" viewBox="0 0 20 20"><path d="M0 0h20v15.500h-7L10 19.500l-3-4H0z" fill="#fff"/><path d="M4 4.500h12M4 8h12M4 11.500h8" stroke="#222" stroke-width="1.200"/></svg>
    <div class="mr-[5px] ml-[25px] h-full w-px bg-[#555b62]"></div>
  </div>
</div>
</body>
</html>
